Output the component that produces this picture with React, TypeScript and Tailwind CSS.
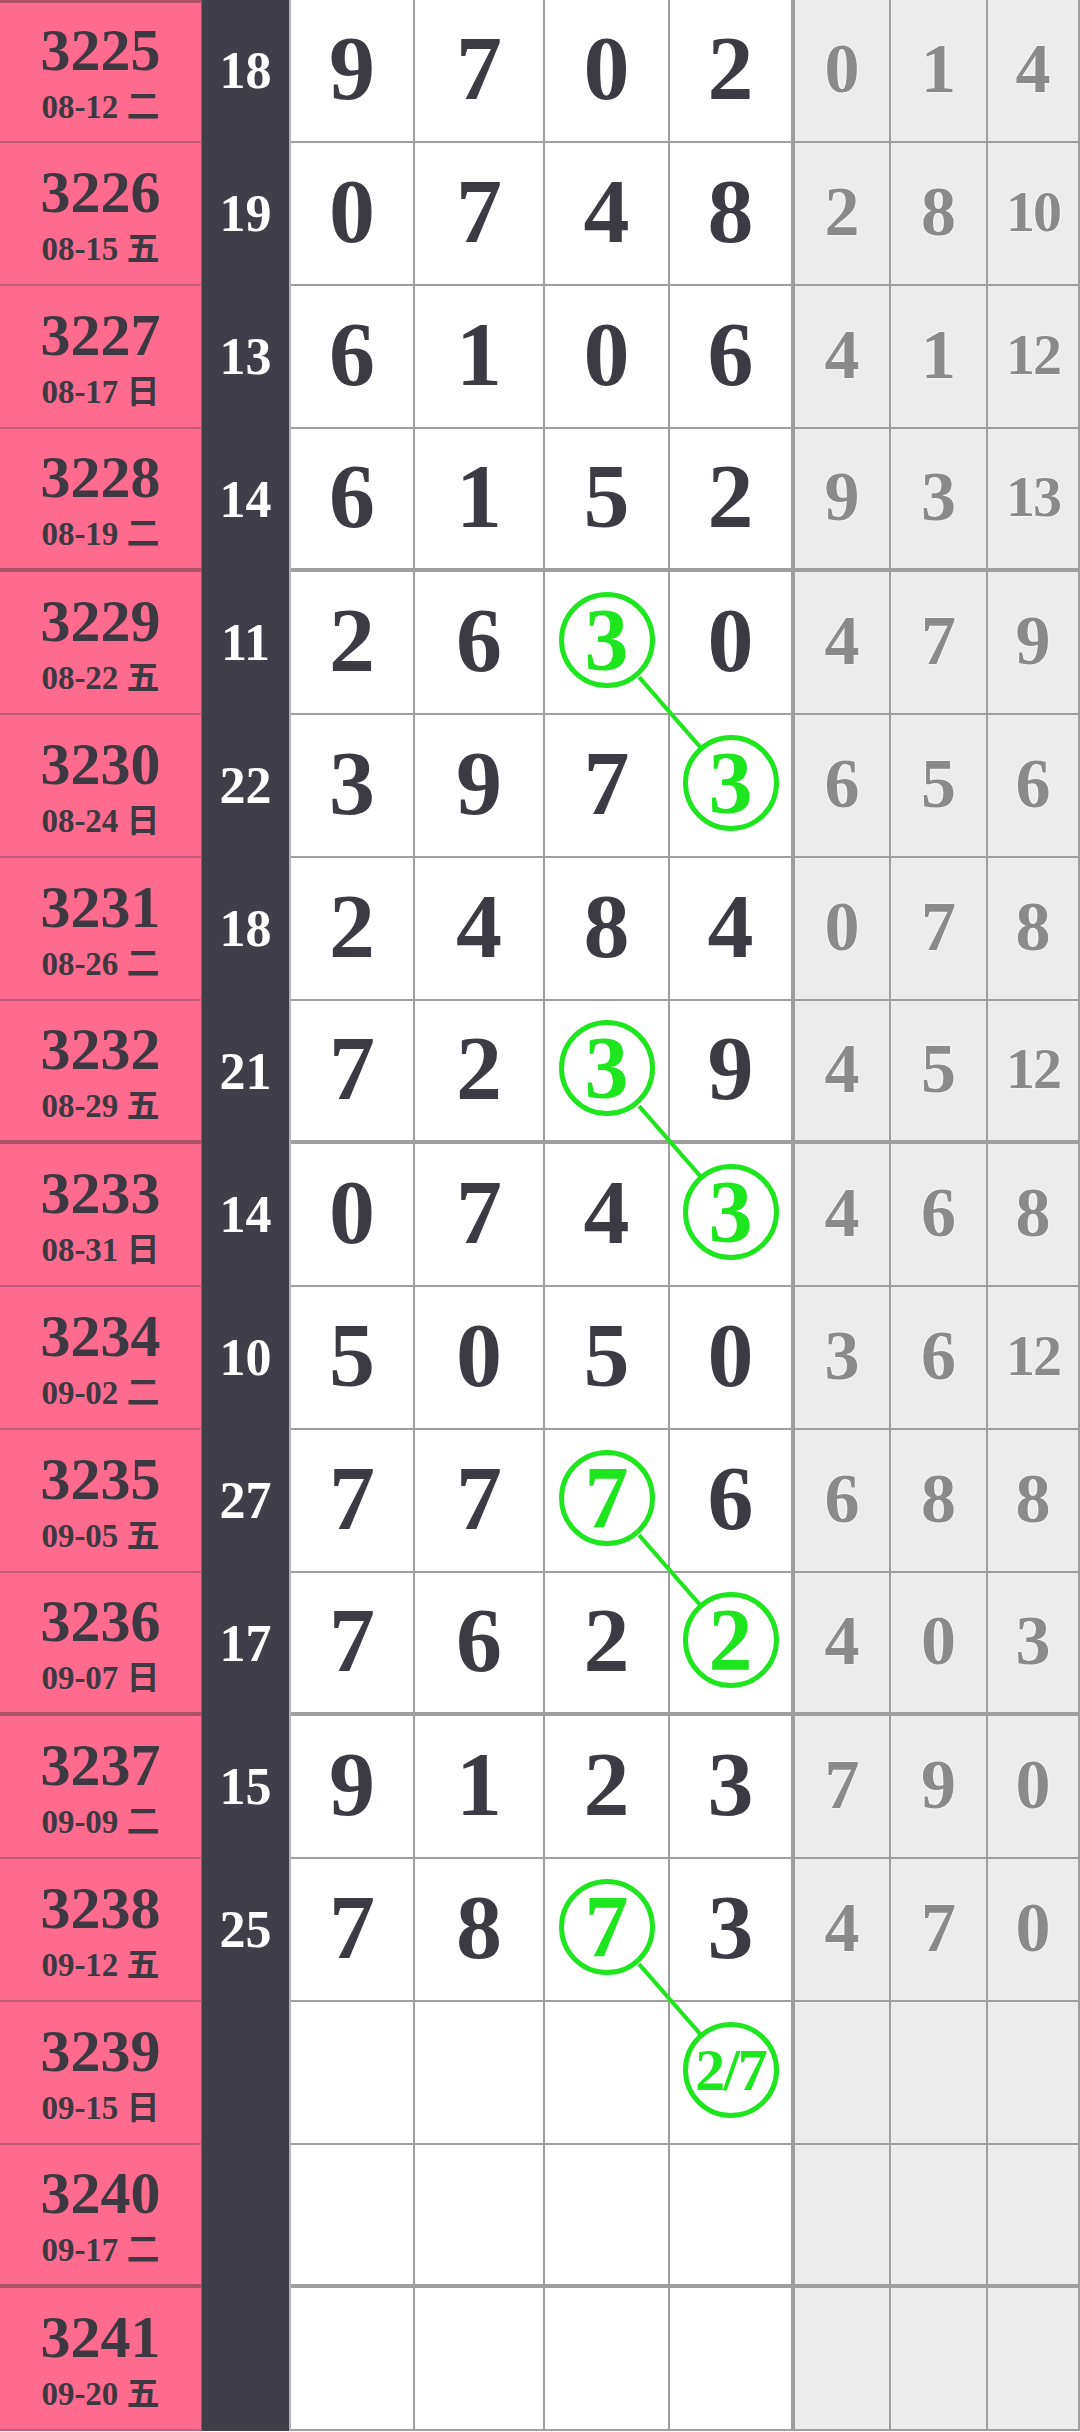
import React from "react";

type Row = {
  no: string;
  date: string;
  sum?: number;
  nums?: (number | null)[];
  hits?: number[];
  circle?: { col: number; text: string };
};

const rows: Row[] = [
  { no: "3225", date: "08-12 二", sum: 18, nums: [9, 7, 0, 2], hits: [0, 1, 4] },
  { no: "3226", date: "08-15 五", sum: 19, nums: [0, 7, 4, 8], hits: [2, 8, 10] },
  { no: "3227", date: "08-17 日", sum: 13, nums: [6, 1, 0, 6], hits: [4, 1, 12] },
  { no: "3228", date: "08-19 二", sum: 14, nums: [6, 1, 5, 2], hits: [9, 3, 13] },
  { no: "3229", date: "08-22 五", sum: 11, nums: [2, 6, null, 0], hits: [4, 7, 9], circle: { col: 2, text: "3" } },
  { no: "3230", date: "08-24 日", sum: 22, nums: [3, 9, 7, null], hits: [6, 5, 6], circle: { col: 3, text: "3" } },
  { no: "3231", date: "08-26 二", sum: 18, nums: [2, 4, 8, 4], hits: [0, 7, 8] },
  { no: "3232", date: "08-29 五", sum: 21, nums: [7, 2, null, 9], hits: [4, 5, 12], circle: { col: 2, text: "3" } },
  { no: "3233", date: "08-31 日", sum: 14, nums: [0, 7, 4, null], hits: [4, 6, 8], circle: { col: 3, text: "3" } },
  { no: "3234", date: "09-02 二", sum: 10, nums: [5, 0, 5, 0], hits: [3, 6, 12] },
  { no: "3235", date: "09-05 五", sum: 27, nums: [7, 7, null, 6], hits: [6, 8, 8], circle: { col: 2, text: "7" } },
  { no: "3236", date: "09-07 日", sum: 17, nums: [7, 6, 2, null], hits: [4, 0, 3], circle: { col: 3, text: "2" } },
  { no: "3237", date: "09-09 二", sum: 15, nums: [9, 1, 2, 3], hits: [7, 9, 0] },
  { no: "3238", date: "09-12 五", sum: 25, nums: [7, 8, null, 3], hits: [4, 7, 0], circle: { col: 2, text: "7" } },
  { no: "3239", date: "09-15 日", circle: { col: 3, text: "2/7" } },
  { no: "3240", date: "09-17 二" },
  { no: "3241", date: "09-20 五" },
];

const ROW_H = 143;
const COL_CENTERS = [353, 480, 607.5, 732.5];
const CIRCLE_Y = 69;

const Circle = ({ text }: { text: string }) => (
  <span
    className={`flex h-[96px] w-[96px] items-center justify-center rounded-full border-[5px] border-[#1ee61e] leading-none text-[#1ee61e] [text-shadow:0_0_3px_#fff] ${
      text.length > 1 ? "text-[60px] tracking-[-2px]" : "text-[88px]"
    }`}
  >
    {text}
  </span>
);

export default function App() {
  // pairs of circles joined by a line: top one in col 2, next row in col 3
  const links = rows
    .map((r, i) => (r.circle && r.circle.col === 2 ? i : -1))
    .filter((i) => i >= 0)
    .map((i) => {
      const x1 = COL_CENTERS[2];
      const y1 = i * ROW_H + CIRCLE_Y;
      const x2 = COL_CENTERS[3];
      const y2 = (i + 1) * ROW_H + CIRCLE_Y;
      const len = Math.hypot(x2 - x1, y2 - y1);
      const ux = (x2 - x1) / len;
      const uy = (y2 - y1) / len;
      const r = 48;
      return { x1: x1 + ux * r, y1: y1 + uy * r, x2: x2 - ux * r, y2: y2 - uy * r };
    });

  return (
    <div className="relative w-[1080px] overflow-hidden bg-white font-['Liberation_Serif','Noto_Sans_CJK_SC',serif] font-bold">
      {rows.map((row, i) => {
        const groupEnd = i % 4 === 3;
        const lineB = groupEnd ? "border-b-4" : "border-b-2";
        return (
          <div
            key={row.no}
            className="grid h-[143px] grid-cols-[202px_89px_124px_130px_125px_125px_96px_97px_92px]"
          >
            {/* period + date */}
            <div
              className={`flex flex-col items-center justify-center border-r border-r-[#9a4f67] bg-[#ff6b8e] text-[#3d3942] ${
                groupEnd ? "border-b-4 border-b-[#ad5169]" : "border-b-2 border-b-[#c25c78]"
              } ${i === 0 ? "border-t-[3px] border-t-[#ad5169]" : ""}`}
            >
              <span className="text-[60px] leading-none">{row.no}</span>
              <span className="mt-[11px] text-[33px] leading-none">{row.date}</span>
            </div>

            {/* sum */}
            <div className="flex items-center justify-center border-r-2 border-r-[#b4b4b8] bg-[#3f3e49] pb-[1px] text-[52px] leading-none text-white">
              {row.sum ?? ""}
            </div>

            {/* numbers */}
            {[0, 1, 2, 3].map((c) => (
              <div
                key={c}
                className={`flex items-center justify-center border-[#9e9e9e] bg-white pb-[5px] text-[92px] leading-none text-[#3c3b44] ${lineB} ${
                  c === 3 ? "border-r-4" : "border-r-2"
                }`}
              >
                {row.circle && row.circle.col === c ? (
                  <Circle text={row.circle.text} />
                ) : (
                  row.nums?.[c] ?? ""
                )}
              </div>
            ))}

            {/* hits */}
            {[0, 1, 2].map((c) => {
              const v = row.hits?.[c];
              return (
                <div
                  key={c}
                  className={`flex items-center justify-center border-r-2 border-[#9e9e9e] bg-[#ececec] pb-[3px] leading-none text-[#8a8a8a] [text-shadow:0_0_2px_#fff,0_0_2px_#fff] ${lineB} ${
                    v !== undefined && v >= 10 ? "text-[58px] tracking-[-2px]" : "text-[70px]"
                  }`}
                >
                  {v ?? ""}
                </div>
              );
            })}
          </div>
        );
      })}

      <svg
        className="pointer-events-none absolute left-0 top-0"
        width={1080}
        height={rows.length * ROW_H}
        viewBox={`0 0 1080 ${rows.length * ROW_H}`}
      >
        {links.map((l, k) => (
          <line key={k} x1={l.x1} y1={l.y1} x2={l.x2} y2={l.y2} stroke="#1ee61e" strokeWidth={4} />
        ))}
      </svg>
    </div>
  );
}
